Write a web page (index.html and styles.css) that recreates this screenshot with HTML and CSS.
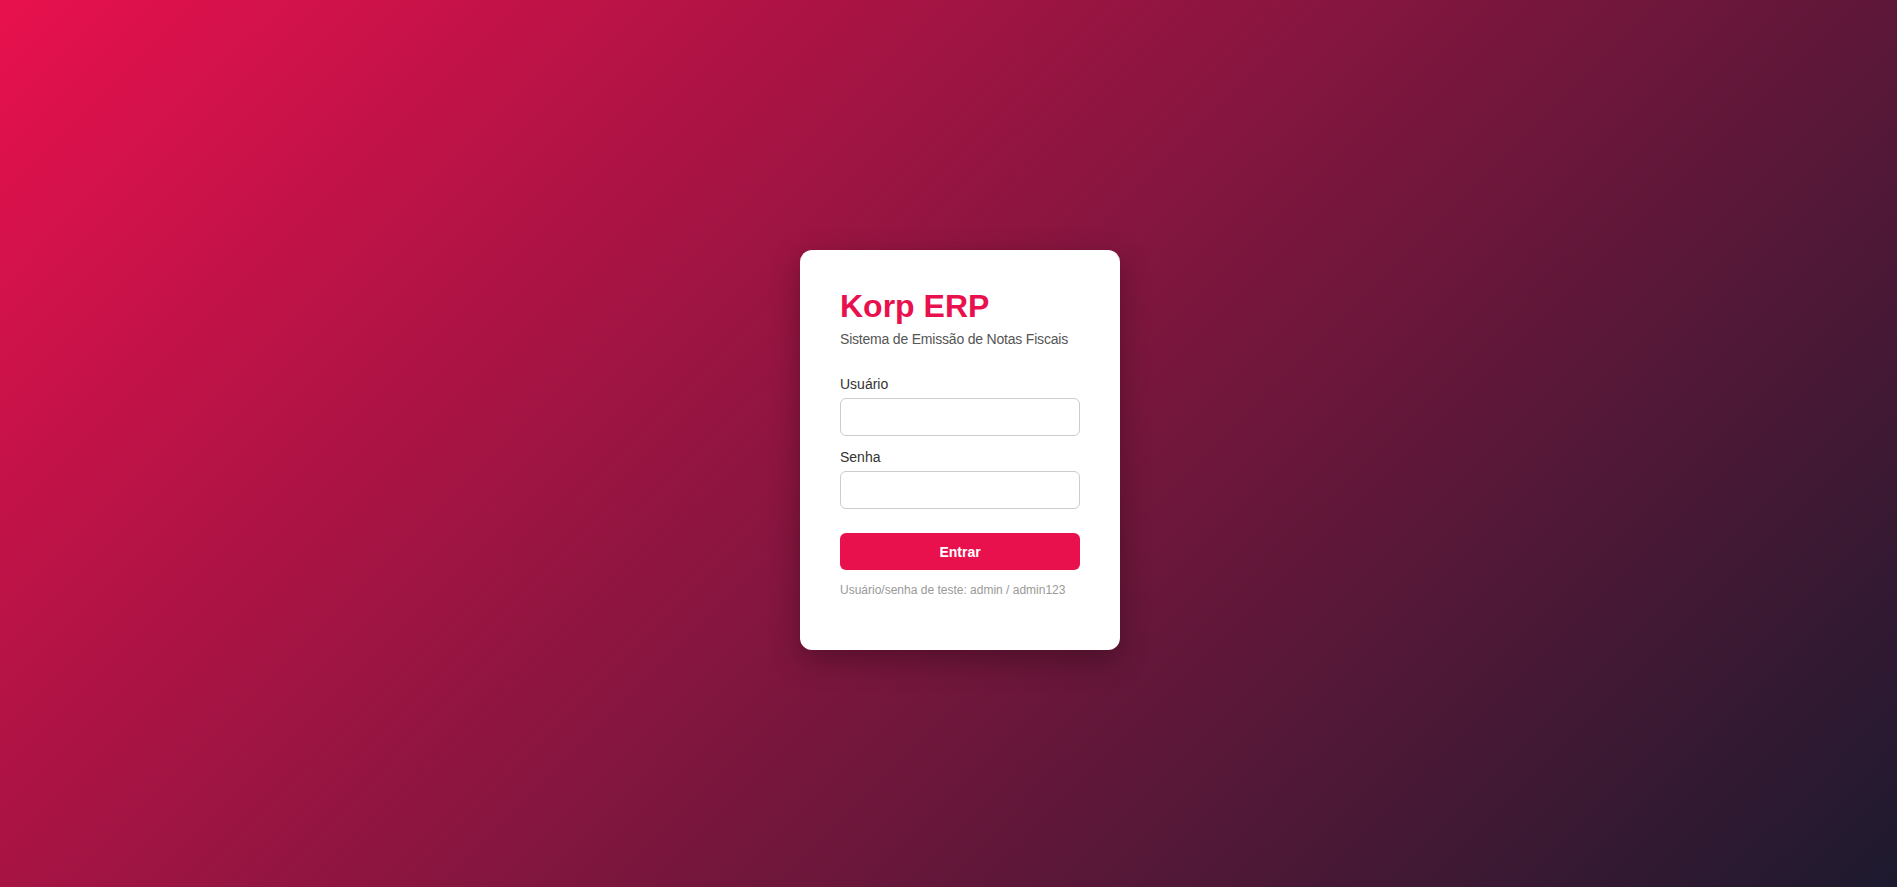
FILE: index.html
```html
<!DOCTYPE html>
<html lang="pt-BR">
<head>
    <meta charset="UTF-8">
    <meta name="viewport" content="width=device-width, initial-scale=1.0">
    <title>Korp ERP - Login</title>
    <link rel="stylesheet" href="styles.css">
</head>
<body>
    <div class="login-page">
        <div class="login-card">
            <h1 class="login-title">Korp ERP</h1>
            <p class="login-subtitle">Sistema de Emissão de Notas Fiscais</p>

            <form id="loginForm" class="login-form">
                <div class="form-group">
                    <label for="usuario">Usuário</label>
                    <input type="text" id="usuario" name="usuario">
                </div>

                <div class="form-group">
                    <label for="senha">Senha</label>
                    <input type="password" id="senha" name="senha">
                </div>

                <button type="submit" class="login-button">Entrar</button>
            </form>

            <p class="login-hint">Usuário/senha de teste: admin / admin123</p>
        </div>
    </div>
</body>
</html>
```

FILE: styles.css
```css
body {
    margin: 0;
    padding: 0;
    font-family: "Liberation Sans", Arial, sans-serif;
    overflow: hidden;
}

.login-page {
    width: 1920px;
    height: 900px;
    display: flex;
    align-items: center;
    justify-content: center;
    background: linear-gradient(135deg, #e8114e 0%, #1a1a2e 100%);
}

.login-card {
    background-color: #fff;
    width: 320px;
    padding: 38px 40px 40px;
    border-radius: 12px;
    box-shadow: 0px 10px 30px rgba(0, 0, 0, 0.3);
    box-sizing: border-box;
}

.login-title {
    margin: 0;
    font-size: 32px;
    font-weight: bold;
    color: #e8114e;
}

.login-subtitle {
    margin: 6px 0 29px;
    font-size: 14px;
    letter-spacing: -0.2px;
    color: #555;
}

.form-group {
    margin-bottom: 13px;
}

.form-group label {
    display: block;
    margin-bottom: 6px;
    font-size: 14px;
    color: #333;
}

.form-group input {
    display: block;
    width: 100%;
    height: 38px;
    padding: 8px 10px;
    border: 1px solid #ccc;
    border-radius: 6px;
    box-sizing: border-box;
    font-size: 14px;
    font-family: inherit;
}

.login-button {
    display: block;
    width: 100%;
    height: 37px;
    margin-top: 24px;
    border: none;
    border-radius: 6px;
    background-color: #e8114e;
    color: #fff;
    font-family: inherit;
    font-size: 14px;
    font-weight: bold;
    cursor: pointer;
}

.login-button:hover {
    background-color: #c90e43;
}

.login-hint {
    margin: 13px 0 13px;
    font-size: 12px;
    white-space: nowrap;
    color: #999;
}
```
